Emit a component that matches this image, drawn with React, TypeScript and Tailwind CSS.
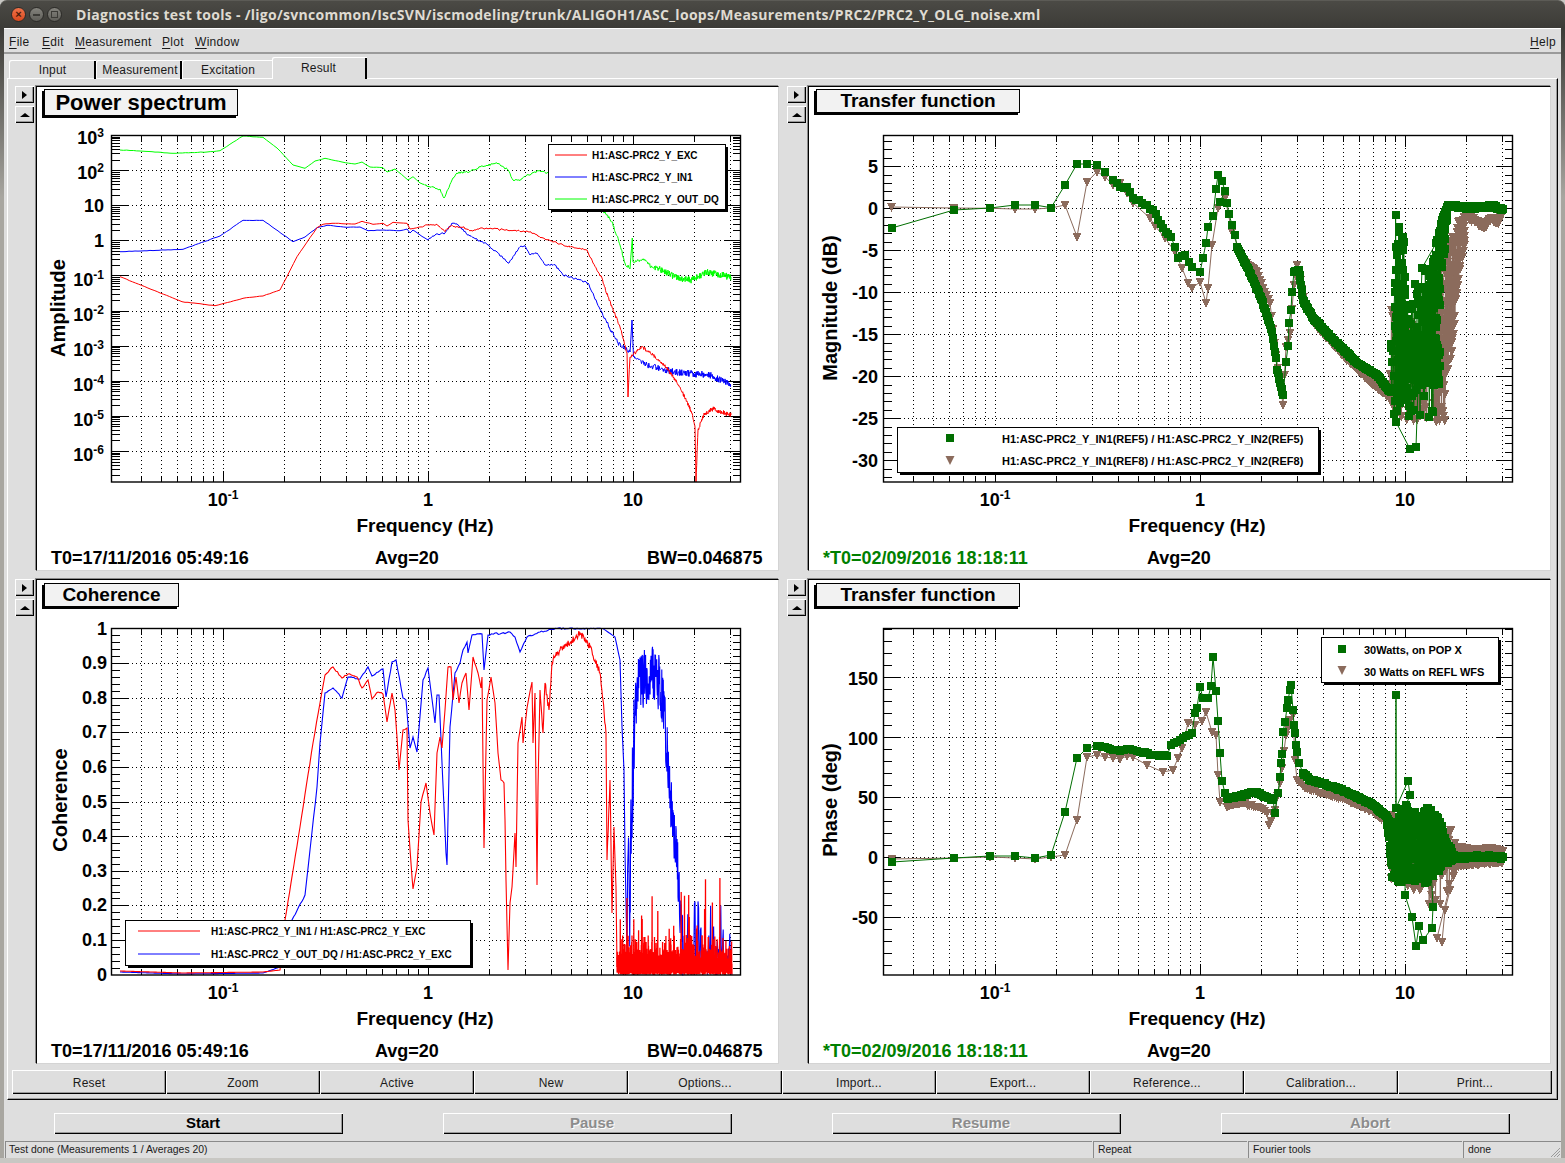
import { ReactNode } from 'react'

type P = [number, number]

// small seeded prng so the noise stays the same between runs
function rng(seed: number) {
  let a = seed
  return () => {
    a = (a + 0x6d2b79f5) | 0
    let t = Math.imul(a ^ (a >>> 15), 1 | a)
    t = (t + Math.imul(t ^ (t >>> 7), 61 | t)) ^ t
    return ((t ^ (t >>> 14)) >>> 0) / 4294967296
  }
}

function dense(pts: P[], seed: number, step: (x: number) => number, amp: (x: number) => number): P[] {
  const r = rng(seed)
  const out: P[] = []
  for (let i = 0; i < pts.length - 1; i++) {
    const [x0, y0] = pts[i]
    const [x1, y1] = pts[i + 1]
    out.push([x0, y0])
    const n = Math.floor(Math.abs(x1 - x0) / step(x0))
    for (let k = 1; k < n; k++) {
      const t = k / n
      const x = x0 + (x1 - x0) * t
      out.push([x, y0 + (y1 - y0) * t + (r() - 0.5) * 2 * amp(x)])
    }
  }
  out.push(pts[pts.length - 1])
  return out
}

function at(env: P[], x: number) {
  for (let i = 0; i < env.length - 1; i++) {
    if (x <= env[i + 1][0]) {
      const t = (x - env[i][0]) / (env[i + 1][0] - env[i][0])
      return env[i][1] + (env[i + 1][1] - env[i][1]) * t
    }
  }
  return env[env.length - 1][1]
}

function scatter(top: P[], bot: P[], n: number, seed: number): P[] {
  const r = rng(seed)
  const x0 = top[0][0]
  const x1 = top[top.length - 1][0]
  const out: P[] = []
  for (let i = 0; i < n; i++) {
    const x = x0 + ((x1 - x0) * i) / n
    const a = at(top, x)
    const b = at(bot, x)
    out.push([x, a + (b - a) * r()])
  }
  return out
}

const line = (p: P[]) => p.map(([x, y]) => `${x.toFixed(1)},${y.toFixed(1)}`).join(' ')
const squares = (p: P[]) => p.map(([x, y]) => `M${(x - 4).toFixed(1)} ${(y - 4).toFixed(1)}h8v8h-8z`).join('')
const tris = (p: P[]) => p.map(([x, y]) => `M${(x - 4.5).toFixed(1)} ${(y - 4).toFixed(1)}h9l-4.5 9z`).join('')

/* ---- power spectrum curves ---- */
const psGreen: P[] = [[120,150],[140,151],[173,153.3],[207,152],[220,150.7],[243,136],[263,137.3],[277,148],[293,165],[305,168.3],[315,161],[325,158.3],[342,162],[355,164],[362,162],[370,167],[383,167.7],[387,172],[395,169],[408,180],[413,176.7],[420,183],[430,186.7],[440,189],[444,198],[452,180],[457,173],[470,171.7],[480,167],[497,163],[508,170],[513,180],[520,180.7],[527,175],[540,170.7],[547,173],[560,175],[590,195],[607,215],[612,221.7],[620,245],[625,263],[630,269],[632.3,238],[633,262],[643,260],[657,268],[677,278],[692,280],[707,272],[731,277]]
const psBlue: P[] = [[120,251.7],[183,249.3],[220,236],[243,220.3],[263,220.3],[293,241.7],[305,237],[317,227.7],[327,225.3],[347,227.3],[360,227],[368,230.7],[383,230],[400,230.7],[407,229],[410,233],[413,230],[428,240],[435,235],[445,233],[452,223],[458,225],[468,235],[488,245],[509,263],[520,246.7],[525,245.7],[530,255],[537,253],[545,265],[555,265],[563,275],[580,280],[588,283],[597,303],[607,323],[618,343],[630,352],[632,320],[633.5,357],[647,365],[663,370],[683,373],[710,375],[731,385]]
const psRed: P[] = [[120,276.7],[182,301.7],[215,305.7],[243,298.3],[263,296],[280,290],[297,256.7],[317,227.7],[323,224.3],[332,223.3],[355,224],[362,221.3],[373,224.3],[383,223.3],[387,226],[393,222.3],[407,223.3],[410,229],[429,225],[437,224.3],[445,231.7],[450,226],[463,227],[470,231],[480,228],[530,231.7],[543,238],[563,245],[587,250],[593,263],[602,278],[608,297],[620,327],[627,353],[628,397],[630,357],[642,347],[653,355],[667,368],[680,387],[692,413],[695,427],[696,482],[698,430],[705,413],[713,409],[731,415]]

const st1 = (x: number) => (x < 420 ? 3 : x < 600 ? 1 : x < 650 ? 0.6 : 0.3)
const greenLine = dense(psGreen, 3, st1, (x) => (x < 420 ? 0.2 : x < 600 ? 1 : x < 650 ? 1.8 : 3.4))
const blueLine = dense(psBlue, 5, st1, (x) => (x < 420 ? 0.2 : x < 600 ? 1 : x < 640 ? 2 : 3.4))
const redLine = dense(psRed, 7, st1, (x) => (x < 420 ? 0.2 : x < 600 ? 0.9 : x < 700 ? 1.6 : 2.4))

/* ---- coherence curves ---- */
const cohRed: P[] = [[120,971],[183,973],[263,972],[280,970],[285,920],[300,827],[313,743],[320,703],[325,675],[333,667],[342,678],[348,674],[357,677],[362,688],[368,680],[372,699],[378,692],[383,694],[387,722],[392,693],[395,710],[397,737],[399,770],[403,730],[407,728],[408,820],[412,877],[413,889],[417,867],[421,802],[426,783],[430,813],[434,835],[437,753],[440,737],[442,748],[445,710],[448,667],[451,667],[453,700],[456,677],[459,703],[462,683],[466,673],[469,710],[473,657],[478,673],[481,688],[482,677],[484,848],[487,700],[491,677],[495,703],[498,753],[501,780],[504,783],[505,820],[506,880],[508,970],[510,903],[512,887],[513,870],[515,833],[516,867],[518,743],[522,717],[523,743],[527,708],[532,682],[533,743],[535,693],[537,885],[538,787],[540,690],[543,733],[545,683],[549,710],[552,663],[555,657],[560,650],[570,643],[580,633],[590,647],[595,660],[600,673],[603,700],[606,733],[607,860],[610,780],[612,913],[614,827],[616,887],[617,967]]
const cohBlue: P[] = [[120,972],[183,974],[263,973],[280,967],[292,920],[305,895],[310,850],[317,787],[320,743],[325,693],[333,688],[342,698],[348,677],[360,679],[368,667],[372,676],[383,669],[386,697],[392,662],[396,660],[403,698],[406,700],[410,748],[413,737],[417,752],[423,680],[428,668],[435,723],[437,695],[439,695],[446,853],[447,865],[450,727],[455,673],[460,663],[463,650],[467,642],[468,653],[472,635],[482,634],[484,670],[488,635],[495,633],[500,634],[510,632],[515,637],[520,652],[527,637],[540,632],[557,628.5],[603,628.5],[615,637],[620,660],[622,727],[624,770],[625,853],[627,953]]

function redTail(): P[] {
  const r = rng(11)
  const out: P[] = []
  for (let x = 617; x < 732; x += 0.3) {
    const v = r()
    const up = v > 0.94 ? 35 + r() * 70 : v > 0.6 ? 16 + r() * 24 : 8 + r() * 18
    out.push([x, 975 - up], [x + 0.15, 975 - r() * 4])
  }
  return out
}
function blueTail(): P[] {
  const r = rng(13)
  const out: P[] = []
  const mid: P[] = [[627,953],[630,880],[633,790],[636,700],[640,680],[653,672],[660,685],[665,720],[668,770],[672,810],[677,860],[683,950]]
  for (let x = 627; x < 683; x += 0.3) {
    const c = at(mid, x)
    const a = x < 634 ? 80 : 30
    out.push([x, Math.max(645, c + (r() - 0.5) * a * 2)])
  }
  for (let x = 683; x < 732; x += 0.6) out.push([x, 975 - r() * r() * 85])
  return out
}
const cohRedLine = dense(cohRed, 17, (x) => (x < 540 ? 1.5 : 0.6), (x) => (x > 540 ? 3.5 : x > 280 ? 0.8 : 0))
const cohRedTail = redTail()
const cohBlueLine = [...dense(cohBlue, 19, () => 1.5, (x) => (x > 280 && x < 600 ? 0.7 : 0)), ...blueTail()]

/* ---- magnitude ---- */
const magG: P[] = [[891.7,228],[954,210],[990,208],[1015,205],[1035,205],[1051,207.7],[1065,185],[1077,164],[1087,164],[1097,165],[1105,171.7],[1113,180],[1120,187],[1127,187],[1133,198],[1139,200],[1153,210],[1158,220],[1163,228],[1171,237],[1175,247],[1178,258],[1185,255],[1192,267],[1200,272],[1203,258],[1206,243],[1208,227],[1213,216],[1216,189],[1218,175],[1222,181],[1225,191],[1220,202],[1227,203],[1229,214],[1232,225],[1235,235],[1237,247]]
const magG1 = dense(magG.slice(11, 24), 9, () => 2.5, () => 1.2)
const magG2 = dense([[1237,247],[1250,273],[1262,300],[1272,332],[1274,346],[1276,358],[1277,370],[1280,383],[1283,395]], 1, () => 0.7, () => 0.6)
const magG3: P[] = [[1286,362],[1288,346],[1289,323],[1291,310],[1292,292],[1294,272]]
const magG4 = dense([[1294,272],[1299,270],[1303,300],[1313,318],[1327,333],[1357,363],[1377,375],[1387,388],[1391,392]], 2, () => 0.6, () => 0.7)
const magGChaos = [
  ...scatter([[1395,212],[1405,225],[1405.5,300]], [[1395,340],[1405,340],[1405.5,340]], 50, 33),
  ...scatter([[1391,340],[1402,300],[1405,270],[1420,290],[1425,268],[1432,265],[1440,232]], [[1391,425],[1402,400],[1410,425],[1418,425],[1425,420],[1433,415],[1440,300]], 110, 23),
  ...scatter([[1400,332],[1440,332]], [[1400,385],[1440,385]], 170, 29),
  ...scatter([[1425,290],[1440,225],[1447,205]], [[1425,345],[1440,290],[1450,215]], 90, 37),
  [1396,422],[1410,449],[1416,447],[1422,268],[1438,240] as P,
] as P[]
const magG5 = dense([[1436,290],[1438,240],[1443,217],[1448,205],[1460,207],[1473,208],[1490,206],[1503,209]], 4, () => 0.6, () => 1.6)
// magG1 only thickens the markers, the connecting line follows the control points
const magGLine = [...magG, ...magG2, ...magG3, ...magG4, ...magGChaos, ...magG5]
const magGAll = [...magGLine, ...magG1]

const magB: P[] = [[891.7,207],[954,208],[990,208.3],[1015,209],[1035,209],[1051,208],[1065,205],[1077,236.7],[1087,182],[1097,171.7],[1105,176.7],[1113,185],[1120,183],[1127,193],[1133,203],[1150,218],[1155,226],[1165,238],[1175,252],[1182,268],[1188,283],[1192,288],[1200,282],[1206,303],[1208,288],[1212,245],[1218,208],[1225,198],[1232,232],[1245,262],[1257,272],[1263,288],[1270,303],[1276,355],[1283,405],[1286,347],[1290,333],[1294,285],[1297,265],[1305,305],[1315,325],[1345,358],[1373,385],[1390,398]]
const magBChaos = [
  ...scatter([[1390,300],[1400,330],[1425,310],[1442,300],[1452,240]], [[1390,410],[1400,420],[1425,425],[1442,430],[1452,345]], 130, 31),
  ...scatter([[1435,300],[1445,250],[1455,225],[1465,215]], [[1435,430],[1445,420],[1452,350],[1460,270],[1470,220]], 170, 39),
]
const magB2 = dense([[1463,220],[1468,217],[1485,226],[1491,218],[1498,223],[1503,212]], 6, () => 0.7, () => 2.2)
const magBAll = [...dense(magB, 8, (x) => (x > 1240 ? 1.5 : 99), () => 0.7), ...magBChaos, ...magB2]

/* ---- phase ---- */
const phG: P[] = [[892,862],[954,858],[990,856],[1015,856],[1035,858],[1051,855],[1065,812],[1077,758],[1087,748],[1097,746],[1105,747],[1113,750],[1120,751],[1127,749],[1133,750],[1140,752],[1153,755],[1167,756],[1171,745],[1183,738],[1192,733],[1195,713],[1197,708],[1200,687],[1203,698],[1208,698],[1211,686],[1213,657],[1216,691],[1218,721],[1220,753],[1222,781],[1225,793],[1227,798],[1240,796],[1255,792],[1273,800],[1275,813],[1278,793],[1280,777],[1281,763],[1282,754],[1283,732],[1285,722],[1287,708],[1288,700],[1290,690],[1291,685],[1293,710],[1294,725],[1295,733],[1296,745],[1297,752],[1299,763],[1303,773]]
const phG1 = dense(phG.slice(9, 21), 59, () => 2.5, () => 0.8)
const phGDense = dense([[1227,798],[1240,796],[1255,792],[1273,800]], 41, () => 1, () => 1.2)
const phG2 = dense([[1303,773],[1310,780],[1323,783],[1347,792],[1373,805],[1387,817]], 43, () => 0.6, () => 1)
const phGChaos = [
  ...scatter([[1387,817],[1395,825],[1405,805],[1420,815],[1428,805],[1440,820],[1446,840],[1455,855]], [[1387,830],[1392,880],[1402,885],[1410,880],[1430,885],[1440,870],[1450,862],[1455,860]], 420, 47),
  [1396,808],[1396,695],[1396,808],[1408,781],[1410,795],[1406,805],[1405,895],[1412,917],[1416,946],[1419,926],[1423,940],[1432,928],[1433,907],[1428,808] as P,
] as P[]
const phG3 = dense([[1455,858],[1467,857],[1503,857]], 45, () => 0.6, () => 1.6)
const phGLine = [...phG, ...phG2, ...phGChaos, ...phG3]
const phGAll = [...phGLine, ...phG1, ...phGDense]

const phB: P[] = [[892,859],[954,858],[990,857],[1015,858],[1035,859],[1051,857],[1065,855],[1077,820],[1087,757],[1097,755],[1105,757],[1113,758],[1120,759],[1127,756],[1133,757],[1147,765],[1163,772],[1173,770],[1178,758],[1182,748],[1188,723],[1195,725],[1202,721],[1206,712],[1212,732],[1216,735],[1218,775],[1220,802],[1227,807],[1243,803],[1258,807],[1267,813],[1269,825],[1275,810],[1280,783],[1286,735],[1290,720],[1293,715],[1295,760],[1297,780],[1305,788],[1322,793],[1347,800],[1373,812],[1390,825]]
const phBAll = [
  ...dense(phB, 51, (x) => (x > 1225 ? 2 : 99), () => 1),
  ...scatter([[1390,810],[1410,820],[1440,820],[1450,828],[1457,842]], [[1390,880],[1410,890],[1430,905],[1445,910],[1457,872]], 140, 53),
  [1437,938],[1442,942],[1445,910],[1450,890] as P,
  ...dense([[1457,848],[1473,850],[1495,849],[1503,851]], 55, () => 1, () => 1.4),
  ...dense([[1457,866],[1480,863],[1498,863],[1503,861]], 57, () => 1, () => 1.4),
] as P[]

/* ---- frame helpers ---- */
const FREQ_MINOR = [0.04,0.05,0.06,0.07,0.08,0.09,0.2,0.3,0.4,0.5,0.6,0.7,0.8,0.9,2,3,4,5,6,7,8,9,20,30]
const FREQ_MAJOR = [0.1, 1, 10]

function LabelText({ x, y, base, sup, anchor = 'end' }: { x: number; y: number; base: string; sup?: string; anchor?: 'end' | 'middle' }) {
  return (
    <text x={x} y={y} fontSize={18} fontWeight="bold" textAnchor={anchor}>
      {base}
      {sup && (
        <tspan fontSize={12} dy={-7}>
          {sup}
        </tspan>
      )}
    </text>
  )
}

function Frame({
  left,
  top,
  bottom,
  yMajor,
  yMinor,
  children,
  ylabel,
  ylabelX,
  ycenter,
}: {
  left: number
  top: number
  bottom: number
  yMajor: number[]
  yMinor: number[]
  children: ReactNode
  ylabel: string
  ylabelX: number
  ycenter: number
}) {
  const right = left + 629
  const fx = (f: number) => left + 111.5 + 205 * Math.log10(f / 0.1)
  const tick = (x: number, len: number) => `M${x} ${top}v${len}M${x} ${bottom}v${-len}`
  const xs = FREQ_MINOR.map(fx)
  const xm = FREQ_MAJOR.map(fx)
  let grid = ''
  ;[...xs, ...xm].forEach((x) => (grid += `M${x.toFixed(1)} ${top}V${bottom}`))
  yMajor.forEach((y) => (grid += `M${left} ${y.toFixed(1)}H${right}`))
  let ticks = ''
  xs.forEach((x) => (ticks += tick(+x.toFixed(1), 6)))
  xm.forEach((x) => (ticks += tick(+x.toFixed(1), 11)))
  yMajor.forEach((y) => (ticks += `M${left} ${y.toFixed(1)}h16M${right} ${y.toFixed(1)}h-16`))
  yMinor.forEach((y) => (ticks += `M${left} ${y.toFixed(1)}h8M${right} ${y.toFixed(1)}h-8`))
  return (
    <>
      <path d={grid} stroke="#000" strokeWidth={1} strokeDasharray="1 3" fill="none" shapeRendering="crispEdges" />
      <path d={ticks} stroke="#000" strokeWidth={1} fill="none" shapeRendering="crispEdges" />
      {children}
      <rect x={left} y={top} width={629} height={bottom - top} fill="none" stroke="#000" strokeWidth={1.4} />
      <LabelText x={fx(0.1)} y={bottom + 24} base="10" sup="-1" anchor="middle" />
      <LabelText x={fx(1)} y={bottom + 24} base="1" anchor="middle" />
      <LabelText x={fx(10)} y={bottom + 24} base="10" anchor="middle" />
      <text x={fx(1) - 3} y={bottom + 50} fontSize={19} fontWeight="bold" textAnchor="middle">
        Frequency (Hz)
      </text>
      <text
        transform={`rotate(-90 ${ylabelX} ${ycenter})`}
        x={ylabelX}
        y={ycenter}
        fontSize={20}
        fontWeight="bold"
        textAnchor="middle"
      >
        {ylabel}
      </text>
    </>
  )
}

function Legend({
  x,
  y,
  w,
  h,
  textX,
  size,
  rows,
}: {
  x: number
  y: number
  w: number
  h: number
  textX: number
  size: number
  rows: { y: number; text: string; mark: ReactNode }[]
}) {
  return (
    <>
      <rect x={x + 3} y={y + 3} width={w} height={h} fill="#000" />
      <rect x={x + 0.5} y={y + 0.5} width={w} height={h} fill="#fff" stroke="#000" />
      {rows.map((r) => (
        <g key={r.text}>
          {r.mark}
          <text x={textX} y={r.y + 3.5} fontSize={size} fontWeight="bold">
            {r.text}
          </text>
        </g>
      ))}
    </>
  )
}

const sampleLine = (x0: number, x1: number, y: number, c: string) => <line x1={x0} x2={x1} y1={y} y2={y} stroke={c} strokeWidth={1} />
const greenMark = (x: number, y: number) => <rect x={x - 4} y={y - 4} width={8} height={8} fill="#006e00" />
const brownMark = (x: number, y: number) => <path d={tris([[x, y]])} fill="#8b6b5c" />

const LOG_Y0 = 135.5
const LOG_DEC = 35.1
const powerMajor = [0, 1, 2, 3, 4, 5, 6, 7, 8, 9].map((i) => LOG_Y0 + i * LOG_DEC)
const powerMinor: number[] = []
powerMajor.forEach((y) => [2, 3, 4, 5, 6, 7, 8, 9].forEach((m) => {
  const v = y + LOG_DEC * (1 - Math.log10(m))
  if (v < 482) powerMinor.push(v)
}))
const powerLabels: [string, string | undefined, number, number][] = [
  ['10', '3', 0, 8], ['10', '2', 1, 8], ['10', undefined, 2, 6], ['1', undefined, 3, 6], ['10', '-1', 4, 10], ['10', '-2', 5, 10], ['10', '-3', 6, 10], ['10', '-4', 7, 10], ['10', '-5', 8, 10], ['10', '-6', 9, 10],
]

function PowerPlot() {
  return (
    <svg width={741} height={422} viewBox="37 123 741 422" className="block">
      <Frame left={111.5} top={135.5} bottom={482} yMajor={powerMajor.slice(1, 10)} yMinor={powerMinor} ylabel="Amplitude" ylabelX={65} ycenter={308}>
        <polyline points={line(greenLine)} fill="none" stroke="#00ff00" strokeWidth={1} />
        <polyline points={line(blueLine)} fill="none" stroke="#0000ff" strokeWidth={1} />
        <polyline points={line(redLine)} fill="none" stroke="#ff0000" strokeWidth={1} />
      </Frame>
      {powerLabels.map(([b, s, i, d]) => (
        <LabelText key={i} x={104} y={LOG_Y0 + i * LOG_DEC + d} base={b} sup={s} />
      ))}
      <Legend
        x={548}
        y={144}
        w={177}
        h={65}
        textX={592}
        size={10}
        rows={[
          { y: 155, text: 'H1:ASC-PRC2_Y_EXC', mark: sampleLine(555, 587, 155, '#ff0000') },
          { y: 177, text: 'H1:ASC-PRC2_Y_IN1', mark: sampleLine(555, 587, 177, '#0000ff') },
          { y: 199, text: 'H1:ASC-PRC2_Y_OUT_DQ', mark: sampleLine(555, 587, 199, '#00ff00') },
        ]}
      />
    </svg>
  )
}

const dbY = (d: number) => 208.7 - d * 8.4
const magMajor = [5, 0, -5, -10, -15, -20, -25, -30].map(dbY)
const magMinor: number[] = []
for (let d = 8; d >= -32; d--) if (d % 5 !== 0) magMinor.push(dbY(d))

function MagnitudePlot() {
  return (
    <svg width={741} height={422} viewBox="809 123 741 422" className="block">
      <Frame left={883.5} top={135.5} bottom={482} yMajor={magMajor} yMinor={magMinor} ylabel="Magnitude (dB)" ylabelX={837} ycenter={308}>
        <polyline points={line(magBAll)} fill="none" stroke="#8b6b5c" strokeWidth={1} />
        <path d={tris(magBAll)} fill="#8b6b5c" shapeRendering="crispEdges" />
        <polyline points={line(magGLine)} fill="none" stroke="#006e00" strokeWidth={1} />
        <path d={squares(magGAll)} fill="#006e00" shapeRendering="crispEdges" />
      </Frame>
      {[5, 0, -5, -10, -15, -20, -25, -30].map((d) => (
        <LabelText key={d} x={878} y={dbY(d) + 6.5} base={String(d)} />
      ))}
      <Legend
        x={897}
        y={427}
        w={421}
        h={45}
        textX={1002}
        size={11}
        rows={[
          { y: 439, text: 'H1:ASC-PRC2_Y_IN1(REF5) / H1:ASC-PRC2_Y_IN2(REF5)', mark: greenMark(950, 438) },
          { y: 461.5, text: 'H1:ASC-PRC2_Y_IN1(REF8) / H1:ASC-PRC2_Y_IN2(REF8)', mark: brownMark(950, 460) },
        ]}
      />
    </svg>
  )
}

const cohY = (v: number) => 975 - v * 346
const cohMajor = [0.1, 0.2, 0.3, 0.4, 0.5, 0.6, 0.7, 0.8, 0.9].map(cohY)
const cohMinor: number[] = []
for (let i = 1; i < 50; i++) if (i % 5 !== 0) cohMinor.push(cohY(i / 50))

function CoherencePlot() {
  return (
    <svg width={741} height={422} viewBox="37 616 741 422" className="block">
      <Frame left={111.5} top={628.5} bottom={975} yMajor={cohMajor} yMinor={cohMinor} ylabel="Coherence" ylabelX={67} ycenter={800}>
        <polyline points={line(cohBlueLine)} fill="none" stroke="#0000ff" strokeWidth={1.1} />
        <polyline points={line(cohRedLine)} fill="none" stroke="#ff0000" strokeWidth={1.1} />
        <polyline points={line(cohRedTail)} fill="none" stroke="#ff0000" strokeWidth={1.3} />
      </Frame>
      {['0', '0.1', '0.2', '0.3', '0.4', '0.5', '0.6', '0.7', '0.8', '0.9', '1'].map((t) => (
        <LabelText key={t} x={107} y={cohY(+t) + 5.5} base={t} />
      ))}
      <Legend
        x={125}
        y={920}
        w={345}
        h={45}
        textX={211}
        size={10}
        rows={[
          { y: 931, text: 'H1:ASC-PRC2_Y_IN1 / H1:ASC-PRC2_Y_EXC', mark: sampleLine(138, 200, 931, '#ff0000') },
          { y: 954, text: 'H1:ASC-PRC2_Y_OUT_DQ / H1:ASC-PRC2_Y_EXC', mark: sampleLine(138, 200, 954, '#0000ff') },
        ]}
      />
    </svg>
  )
}

const phY = (d: number) => 857.3 - d * 1.197
const phMajor = [150, 100, 50, 0, -50].map(phY)
const phMinor: number[] = []
for (let d = 190; d >= -90; d -= 10) if (d % 50 !== 0) phMinor.push(phY(d))

function PhasePlot() {
  return (
    <svg width={741} height={422} viewBox="809 616 741 422" className="block">
      <Frame left={883.5} top={628.5} bottom={975} yMajor={phMajor} yMinor={phMinor} ylabel="Phase (deg)" ylabelX={837} ycenter={800}>
        <polyline points={line(phBAll)} fill="none" stroke="#8b6b5c" strokeWidth={1} />
        <path d={tris(phBAll)} fill="#8b6b5c" shapeRendering="crispEdges" />
        <polyline points={line(phGLine)} fill="none" stroke="#006e00" strokeWidth={1} />
        <path d={squares(phGAll)} fill="#006e00" shapeRendering="crispEdges" />
      </Frame>
      {[150, 100, 50, 0, -50].map((d) => (
        <LabelText key={d} x={878} y={phY(d) + 7} base={String(d)} />
      ))}
      <Legend
        x={1321}
        y={637}
        w={177}
        h={45}
        textX={1364}
        size={11}
        rows={[
          { y: 650, text: '30Watts, on POP X', mark: greenMark(1342, 649) },
          { y: 672, text: '30 Watts on REFL WFS', mark: brownMark(1342, 670) },
        ]}
      />
    </svg>
  )
}

const raised = 'bg-[#dedede] shadow-[inset_1px_1px_0_#ffffff,inset_-1px_-1px_0_#000000,inset_-2px_-2px_0_#9a9a9a]'

function SideButtons() {
  return (
    <div className="flex w-[19px] flex-col gap-[3px]">
      <div className={`flex h-[17px] items-center justify-center ${raised}`}>
        <span className="h-0 w-0 border-y-[4px] border-l-[5px] border-y-transparent border-l-black" />
      </div>
      <div className={`flex h-[17px] items-center justify-center ${raised}`}>
        <span className="h-0 w-0 border-x-[5px] border-b-[4px] border-x-transparent border-b-black" />
      </div>
    </div>
  )
}

function Pad({
  title,
  titleClass,
  plot,
  t0,
  green,
  bw,
}: {
  title: string
  titleClass: string
  plot: ReactNode
  t0: string
  green?: boolean
  bw?: string
}) {
  return (
    <div className="flex gap-[2px]">
      <SideButtons />
      <div className="h-[485px] w-[743px] border border-t-black border-r-[#d4d4d4] border-b-[#d4d4d4] border-l-black bg-white shadow-[-1px_-1px_0_#8a8a8a]">
        <div className="h-[36px] pt-[2px] pl-[7px]">
          <div
            className={`flex items-center justify-center border border-black bg-[#f2f2f2] font-bold text-black shadow-[-2px_2px_0_#000000] ${titleClass}`}
          >
            {title}
          </div>
        </div>
        {plot}
        <div className="flex h-[25px] items-center pl-[14px] text-[18px] leading-none font-bold text-black">
          <span className={`w-[324px] ${green ? 'text-[#008000]' : ''}`}>{t0}</span>
          <span className="w-[272px]">Avg=20</span>
          {bw && <span>{bw}</span>}
        </div>
      </div>
    </div>
  )
}

const MENU = [
  { k: 'F', r: 'ile', w: 'w-[33px]' },
  { k: 'E', r: 'dit', w: 'w-[33px]' },
  { k: 'M', r: 'easurement', w: 'w-[87px]' },
  { k: 'P', r: 'lot', w: 'w-[33px]' },
  { k: 'W', r: 'indow', w: 'w-[60px]' },
]

const BOTTOM = ['Reset', 'Zoom', 'Active', 'New', 'Options...', 'Import...', 'Export...', 'Reference...', 'Calibration...', 'Print...']

function BigButton({ label, off }: { label: string; off?: boolean }) {
  return (
    <div
      className={`flex h-[21px] w-[289px] items-center justify-center pl-[9px] text-[15px] font-bold ${raised} ${
        off ? 'text-[#8c8c8c] [text-shadow:1px_1px_0_#ffffff]' : 'text-black'
      }`}
    >
      {label}
    </div>
  )
}

function TitleDot({ bg, children }: { bg: string; children: ReactNode }) {
  return (
    <div className={`flex h-[15px] w-[15px] items-center justify-center rounded-full border border-[#2c2b28] ${bg}`}>{children}</div>
  )
}

export default function App() {
  return (
    <div className="h-[1163px] w-[1565px] overflow-hidden bg-[#c8c7c3] [font-family:'Liberation_Sans',Arial,sans-serif]">
      <div className="flex h-[28px] items-center rounded-t-[7px] border-t border-[#5c5b56] bg-gradient-to-b from-[#4b4a45] to-[#3c3b37]">
        <div className="ml-[11px] flex items-center gap-[3px]">
          <TitleDot bg="bg-gradient-to-b from-[#f0734a] to-[#d8481c]">
            <span className="text-[11px] leading-none font-bold text-[#4a1a08]">×</span>
          </TitleDot>
          <TitleDot bg="bg-gradient-to-b from-[#84837d] to-[#5f5e59]">
            <span className="h-[2px] w-[7px] bg-[#3c3b37]" />
          </TitleDot>
          <TitleDot bg="bg-gradient-to-b from-[#84837d] to-[#5f5e59]">
            <span className="h-[7px] w-[7px] border border-[#3c3b37]" />
          </TitleDot>
        </div>
        <span className="ml-[14px] text-[14px] font-bold tracking-[0.29px] whitespace-nowrap text-[#dfdbd2] [font-family:'Open_Sans',sans-serif]">
          Diagnostics test tools - /ligo/svncommon/IscSVN/iscmodeling/trunk/ALIGOH1/ASC_loops/Measurements/PRC2/PRC2_Y_OLG_noise.xml
        </span>
      </div>

      <div className="bg-gradient-to-b from-[#3c3b37] to-[#a8a6a0] to-15% px-[4px]">
        <div className="h-[1130px] bg-[#dedede] text-black">
          {/* menu bar */}
          <div className="flex h-[26px] items-center border-b-2 border-[#9a9a9a] pt-[3px] pr-[5px] pl-[5px] text-[12px] tracking-[0.3px] text-[#1a1a1a] shadow-[inset_0_1px_0_#ffffff]">
            {MENU.map((m) => (
              <span key={m.k} className={m.w}>
                <span className="underline underline-offset-2">{m.k}</span>
                {m.r}
              </span>
            ))}
            <span className="ml-auto">
              <span className="underline underline-offset-2">H</span>elp
            </span>
          </div>

          {/* tabs */}
          <div className="relative z-10 -mb-px flex h-[25px] items-end pl-[5px] text-[12px] tracking-[0.2px] text-[#1a1a1a]">
            <div className="flex h-[19px] w-[87px] items-center justify-center rounded-tl-[2px] shadow-[inset_1px_1px_0_#ffffff,inset_-2px_0_0_#000000]">Input</div>
            <div className="flex h-[19px] w-[86px] items-center justify-center rounded-tl-[2px] pl-[2px] shadow-[inset_1px_1px_0_#ffffff,inset_-2px_0_0_#000000]">Measurement</div>
            <div className="flex h-[19px] w-[90px] items-center justify-center rounded-tl-[2px] pl-[2px] shadow-[inset_1px_1px_0_#ffffff]">Excitation</div>
            <div className="flex h-[22px] w-[95px] items-center justify-center rounded-tl-[2px] bg-[#dedede] pr-[2px] shadow-[inset_1px_1px_0_#ffffff,inset_-2px_0_0_#000000]">Result</div>
          </div>

          {/* tab panel */}
          <div className="mr-[3px] ml-[3px] h-[1022px] border border-t-white border-r-black border-b-black border-l-white pt-[7px] shadow-[inset_-1px_-1px_0_#9a9a9a]">
            <div className="grid grid-cols-[764px_764px] grid-rows-[485px_485px] gap-x-[8px] gap-y-[8px] pl-[7px]">
              <Pad title="Power spectrum" titleClass="h-[27px] w-[194px] text-[22px]" plot={<PowerPlot />} t0="T0=17/11/2016 05:49:16" bw="BW=0.046875" />
              <Pad title="Transfer function" titleClass="h-[24px] w-[204px] text-[19px]" plot={<MagnitudePlot />} t0="*T0=02/09/2016 18:18:11" green />
              <Pad title="Coherence" titleClass="mt-[1px] h-[24px] w-[135px] text-[19px]" plot={<CoherencePlot />} t0="T0=17/11/2016 05:49:16" bw="BW=0.046875" />
              <Pad title="Transfer function" titleClass="mt-[1px] h-[24px] w-[204px] text-[19px]" plot={<PhasePlot />} t0="*T0=02/09/2016 18:18:11" green />
            </div>
            <div className="mt-[6px] flex pl-[4px]">
              {BOTTOM.map((b) => (
                <div key={b} className={`flex h-[24px] w-[154px] items-center justify-center pt-px text-[12px] tracking-[0.2px] text-[#1a1a1a] ${raised}`}>
                  {b}
                </div>
              ))}
            </div>
          </div>

          {/* run controls */}
          <div className="mt-[13px] flex gap-[100px] pl-[50px]">
            <BigButton label="Start" />
            <BigButton label="Pause" off />
            <BigButton label="Resume" off />
            <BigButton label="Abort" off />
          </div>

          {/* status bar */}
          <div className="mt-[7px] flex h-[17px] gap-[1px] pl-px text-[10.4px] leading-none text-[#1a1a1a]">
            <div className="flex w-[1087px] items-center border-t border-l border-[#8a8a8a] pl-[3px]">Test done (Measurements 1 / Averages 20)</div>
            <div className="flex w-[154px] items-center border-t border-l border-[#8a8a8a] pl-[4px]">Repeat</div>
            <div className="flex w-[214px] items-center border-t border-l border-[#8a8a8a] pl-[4px]">Fourier tools</div>
            <div className="relative flex flex-1 items-center border-t border-l border-[#8a8a8a] pl-[4px]">
              done
              <svg width="12" height="12" viewBox="0 0 12 12" className="absolute right-0 bottom-0">
                <path d="M11 2L2 11M11 5L5 11M11 8L8 11" stroke="#9a9a9a" strokeWidth="1" />
              </svg>
            </div>
          </div>
        </div>
      </div>
    </div>
  )
}
